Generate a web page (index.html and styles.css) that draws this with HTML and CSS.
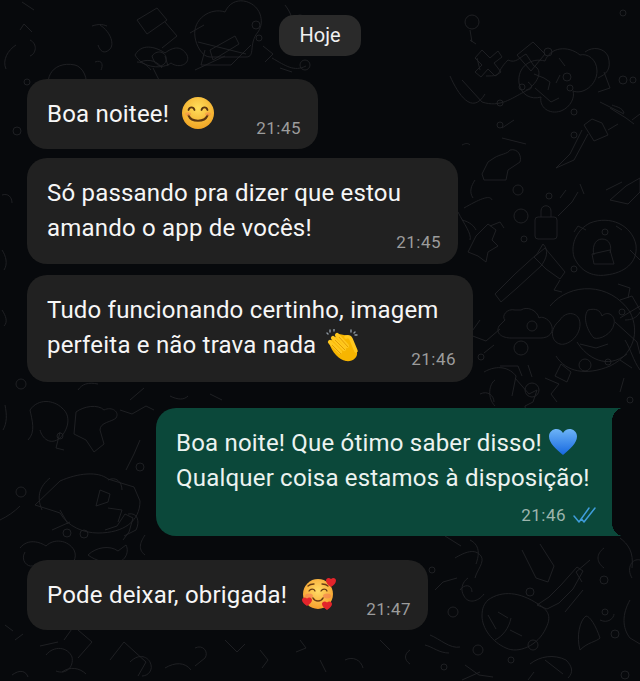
FILE: index.html
```html
<!DOCTYPE html>
<html lang="pt-BR">
<head>
    <meta charset="UTF-8">
    <meta name="viewport" content="width=device-width, initial-scale=1.0">
    <title>Conversa</title>
    <link rel="stylesheet" href="styles.css">
</head>
<body>
<div class="chat">

    <!-- doodle wallpaper behind the messages -->
    <svg class="doodles" width="640" height="681" viewBox="0 0 640 681" fill="none">
        <circle cx="472" cy="22" r="7"/><circle cx="548" cy="52" r="4"/><circle cx="623" cy="13" r="3"/>
        <circle cx="623" cy="80" r="4"/><circle cx="522" cy="87" r="3"/><circle cx="567" cy="77" r="4"/><circle cx="570" cy="88" r="3"/>
        <circle cx="633" cy="80" r="3"/><circle cx="500" cy="103" r="3"/><circle cx="574" cy="112" r="3"/>
        <circle cx="500" cy="125" r="3"/><circle cx="574" cy="135" r="3"/><circle cx="518" cy="190" r="5"/><circle cx="549" cy="196" r="3"/>
        <circle cx="521" cy="216" r="7"/><circle cx="524" cy="239" r="3"/><circle cx="574" cy="269" r="3"/><circle cx="532" cy="326" r="5"/>
        <circle cx="521" cy="348" r="7"/><circle cx="481" cy="357" r="3"/><circle cx="532" cy="390" r="7"/><circle cx="585" cy="365" r="6"/>
        <circle cx="608" cy="362" r="3"/><circle cx="622" cy="312" r="3"/><circle cx="605" cy="232" r="3"/>
        <circle cx="256" cy="25" r="4"/><circle cx="259" cy="38" r="3"/><circle cx="305" cy="65" r="5"/>
        <circle cx="17" cy="131" r="4"/><circle cx="27" cy="82" r="3"/><circle cx="21" cy="492" r="5"/><circle cx="67" cy="533" r="4"/>
        <circle cx="84" cy="534" r="4"/><circle cx="60" cy="436" r="3"/><circle cx="21" cy="384" r="5"/><circle cx="140" cy="467" r="4"/>
        <circle cx="432" cy="570" r="3"/><circle cx="453" cy="612" r="5"/><circle cx="530" cy="592" r="4"/><circle cx="533" cy="645" r="5"/>
        <circle cx="478" cy="650" r="5"/><circle cx="511" cy="660" r="3"/><circle cx="604" cy="580" r="4"/><circle cx="605" cy="612" r="3"/>
        <circle cx="615" cy="634" r="4"/><circle cx="625" cy="675" r="4"/><circle cx="444" cy="667" r="3"/><circle cx="630" cy="400" r="3"/>

        <!-- top left, cake and house -->
        <path d="M55 100c-15-18-4-40 20-35 8 2 14 14 10 24-3 9-20 14-30 11z"/>
        <path d="M47 178l48-14 3 8-46 22c-8 1-10-9-5-16zM60 110c8-12 24-16 22-2-1 8-14 18-16 30 8 2 16-4 20-2M60 145c12 2 24-3 30-6"/>
        <path d="M135 55c8-14 24-6 30-2 8-6 16-8 22 2 4 9-8 14-16 8-8 6-28 6-36-8zM142 96l16 8M95 62c8-3 8 4 6 8"/>
        <path d="M100 25c12 8 14 20 10 24-6 6-10 2-12-4M92 26c6-2 10-2 15 0"/>
        <path d="M137 20l20-12 10 12-20 14zM165 22l12 14-15 12"/>
        <path d="M195 95l12-8 8 10M197 115l22-12 8 4-22 14zM210 50l25-14 4 8-26 16zM195 70l30-14"/>
        <path d="M190 33l14-8M140 62c10-4 18 0 22 6"/>
        <path d="M195 37c-3-18 16-30 30-25 8-18 30-12 35 2 2 6 2 12-2 18-10 12-2 25-12 25H210c-8 0-14-12-15-20zM198 42l48 12M205 50l-4 15h30l20-20"/>
        <path d="M152 56c6-8 16-3 14 5-2 6-10 8-14-5zM137 62c6 0 10 3 14 8"/>
        <circle cx="300" cy="20" r="5"/>
        <path d="M263 46l10 8-8 8M285 5c6 8 10 16 4 26M272 58c14 8 22 14 34 8M280 68l12 4"/>
        <path d="M153 68l6 12-6 5M165 56l3 10"/>
        <path d="M20 30l4-6 8 8M16 45c-8 5-14 15-10 24M30 40c8 4 6 14 0 16"/>

        <!-- top right, flower and star -->
        <path d="M580 55c-12-10-30-8-35 6-14-4-28 6-26 22 2 12 12 17 22 14-2 10 8 18 20 14 10-4 14-14 12-20 10 4 24-6 24-20 0-12-10-18-17-16z"/>
        <path d="M598 78c8-4 14-8 10-22-4-8-15-10-23-4M604 72l6 16-12 4"/>
        <path d="M482 50l8 8 8-7 4 6-8 6 7 9-6 4-7-7-7 8-6-5 7-7-7-7zM517 55l16-13 12 12-14 17z"/>
        <path d="M462 80l20 22c18 6 30-4 42-10 14-8 20-22 10-26l-8-12c-6 3-10 10-18 6-14 14-4 16-22 16"/>
        <path d="M450 76c8 18 22 40 35 18"/>
        <path d="M480 70l-3-12M470 40l6 4M470 30l2 12"/>
        <path d="M510 150c8-2 12 6 10 12l-12 8-2 10h-22l-2-6 6-12 6-4c6-4 14-4 16-8z"/>
        <path d="M565 66l-6-8M535 88l16 14 8-4"/>
        <path d="M584 125l10 16 14-6-6-12-10-4zM582 130l-12 24-14 14 18-8 14-26"/>
        <path d="M560 75l-4 8M502 128l12-8M502 138l24 6"/>
        <path d="M528 82c6 4 4 8-2 8M534 74l10 4 6 4-2 8"/>
        <path d="M600 102l16 8 8 4M612 105c4 2 10 2 12 8"/>
        <path d="M618 124l-10 6M640 114l-8 6M610 108l16 10 8 6"/>

        <!-- right edge, bear and lock -->
        <path d="M590 223c20-8 42 2 46 22 2 18-12 28-30 30-14 2-26-4-32-18-4-14 4-28 16-34z"/>
        <path d="M592 254l18-4 4 14h-20zM594 255c-2-6 0-16 8-16 8 0 10 8 8 14M574 232l4-6 8 4M616 226l6 4"/>
        <path d="M538 217h16a3 3 0 0 1 3 3v16a3 3 0 0 1-3 3h-16a3 3 0 0 1-3-3v-16a3 3 0 0 1 3-3zM541 217v-6c0-7 10-7 10 0v6"/>
        <path d="M558 216l14-14 6-10M566 190l-6 8M580 184l4 10"/>
        <path d="M610 200l16-14 14-8v14l-12 12zM606 190l16-8"/>
        <path d="M476 236l12-12 8 6-4 10 6 6-10 6-2 10-8-6-10-4 4-8zM490 226l10-4 4 6"/>
        <path d="M464 208c14-8 26-14 28-8M458 212c6 12 14 22 12 28"/>
        <path d="M537 254l-22 20-20 20 6 8 16-14 24-22c6-8 8-16 2-22z"/>
        <path d="M545 248l20 24-5 7-14-10-12-12zM560 280l-6 10 8 2"/>
        <path d="M515 310c-8-2-14 6-10 10l-6 6c-4 8 4 12 12 12h30c8 0 14-6 10-14-3-6-10-8-12-6-2-8-12-12-18-8z"/>
        <path d="M550 306c20-24 60-24 80 6 10 20 4 42-20 54-24 10-44 6-54-10"/>
        <path d="M560 320c6-10 20-8 20 4 0 14-14 22-20 20-8-2-12-14 0-24zM588 310c8-2 12 0 14 6 6-6 14 0 12 8-2 10-14 16-20 14-6-6-12-20-6-28z"/>
        <path d="M577 342c10 16 30 28 50 12M580 344l16 4 12-4"/>
        <path d="M620 318l20-12M615 322l22 20 3 12M620 360l12 8"/>
        <path d="M515 378l14 16 8-4-4 12-8 4 2 14M545 378l14 6-8 10 6 8"/>
        <path d="M470 335l16 6 14-12M480 320l-10 14 2 6M494 345l-10 8"/>
        <path d="M495 380c-6 4-8 18 0 26M484 372c14-8 26-4 32 4l-4 20M500 366h18l4 10"/>
        <path d="M555 376l12 6 4-10-10-8zM528 365l4 12"/>
        <path d="M630 250l10 10M618 284l12 4-2 10M620 300l12-4 8 14"/>
        <path d="M625 320c6 0 12-2 15-8M625 340c6 10 8 20 15 30M624 378l-4 14"/>

        <!-- left edge -->
        <path d="M5 405c2 10 2 18-2 25M28 440c8-8 4-20 2-30 8-12 24-10 32-2 10 8 6 22-2 30-10 8-18 0-20-8"/>
        <path d="M60 432l-4 16 8 2"/>
        <path d="M76 412c8-6 22-8 28-2 8-4 16 2 12 8-4 4-16 4-16 12l4 14-10 8-8-12-12-6zM78 390c4-6 10-8 20-6"/>
        <path d="M35 505l25-24c18-8 38-10 48-2l26 8 6 14c0 20-16 32-42 32-14 0-30-6-38-20l-6-2z"/>
        <path d="M50 478c-10 8-14 18-8 32M60 510l8 14M52 530l18-8"/>
        <path d="M100 490l10 4-2 8-12 4zM105 530l12-4 8-12 8 4-4 14-6 8"/>
        <path d="M128 514c10-2 12 8 8 16l-12 6"/>
        <path d="M120 410l12 4 14-8 8 4M140 440l-6 14-8 16"/>
        <path d="M20 548c8-10 20-6 26-2 8-8 22-6 28 4 4 8-2 16-8 18M25 552c-6 10 6 18 10 12 6 6 14 8 18 0"/>
        <path d="M88 555c8-8 22-10 30-4l8-6c4 8-2 18-12 18-8 0-18-2-26-8z"/>
        <path d="M145 535c-4 6-8 14 0 20M108 508l14 2-4 12M108 480c8-4 14 2 14 10"/>
        <path d="M0 520c8-4 14-8 20-14"/>
        <path d="M2 250c4 6 6 14 2 20M2 310c4 6 6 12 2 16M2 195c6-2 10 2 10 8"/>

        <!-- bottom -->
        <path d="M488 600c14-10 32-8 50 4 10 6 14 12 8 24-8 18-28 26-40 20-14-6-24-20-24-32 0-8 2-12 6-16zM495 640c8-4 14-12 16-22"/>
        <path d="M510 630l12 6M488 615l8 14M498 612l10 6"/>
        <path d="M468 578c-6 4-8 12-4 18 4 8 14 6 20-2M460 590c4-6 12-6 12 2"/>
        <path d="M537 605l12-8 12-12 16-18 6 4-10 18-14 14-12 6zM583 590l-18 22"/>
        <path d="M580 650c-4-14 0-30 6-34 4 0 10 10 14 22-4 4-12 4-20 12zM600 620c8 4 14-2 14-6"/>
        <path d="M430 635c10 4 20 14 30 12M425 645c8 2 14 8 24 8M465 665l14 10 14 2M480 672l-18 8"/>
        <path d="M530 664c10-8 24-10 36-4 6 6 8 12 2 18M545 660l18 14M534 672l-6 8"/>
        <path d="M435 590l8-8 14-4M455 558c10-6 20-10 26-2 4 6-4 14-6 22"/>
        <path d="M522 550l14 28 12 4 6-16-14-22M590 560l-14 12 6 10M604 548c-8 6-8 14 0 20"/>
        <path d="M620 538c8 6 14 14 12 30M640 560c-8-2-14 8-8 18M630 600c-8 14-8 28 0 38l10 6"/>
        <path d="M46 655c8-10 22-8 26 2 2 10-6 18-16 14M64 640l10-14M40 646l18-4M78 630l14 12-14 16"/>
        <path d="M12 675c8-6 14-4 16 2M62 672c8-6 18-4 24 2M130 662c10-10 18-4 20 0 4 8-2 14-8 14"/>
        <path d="M110 660l14-18 22 20-8 14M165 668c10-6 20-6 26 2"/>
        <path d="M195 648c8-4 14 4 10 10l-10 8M225 640l12 12 8-8M260 650l8 10-6 8"/>
        <path d="M300 640l6 8-10 4M320 660l6 12M345 660c8-4 16 0 18 8M380 640l10 10M410 650c-6 4-6 10 0 14"/>
        <path d="M15 640l8-6M5 625l8 6"/>
        <path d="M470 540c12 6 8 18 6 24M445 536l16 10"/>

        <!-- between left bubbles and green bubble -->
        <path d="M22 2l12 8M130 400l14-12M170 396c8 4 14 4 18 0M210 394l12 6M480 394c8-4 14 2 14 8"/>
        <path d="M475 180c-4 6-6 12-2 18M462 220c8 2 12 6 14 10M462 145c4-2 6-2 8 0"/>
    </svg>

    <div class="msgs">
        <div class="day">Hoje</div>

        <div class="msg in w1">
            <div class="msg-text">Boa noitee!<svg class="emoji smile" width="34" height="34" viewBox="0 0 34 34">
                <defs><radialGradient id="face1" cx="50%" cy="35%" r="70%"><stop offset="0" stop-color="#ffdf5c"/><stop offset="1" stop-color="#f0a020"/></radialGradient></defs>
                <circle cx="17" cy="17" r="16" fill="url(#face1)"/>
                <path d="M7.5 14c1-3.5 5-3.5 6 0M20.5 14c1-3.5 5-3.5 6 0" fill="none" stroke="#5a3510" stroke-width="1.8" stroke-linecap="round"/>
                <path d="M7.5 19.5c3 7 16 7 19 0" fill="none" stroke="#5a3510" stroke-width="2" stroke-linecap="round"/>
                <ellipse cx="7" cy="18" rx="3" ry="1.8" fill="#f58a4a" opacity=".55"/><ellipse cx="27" cy="18" rx="3" ry="1.8" fill="#f58a4a" opacity=".55"/>
            </svg></div>
            <div class="time">21:45</div>
        </div>

        <div class="msg in w2">
            <div class="msg-text">Só passando pra dizer que estou<br>amando o app de vocês!</div>
            <div class="time">21:45</div>
        </div>

        <div class="msg in w3">
            <div class="msg-text">Tudo funcionando certinho, imagem<br>perfeita e não trava nada<svg class="emoji clap" width="34" height="34" viewBox="0 0 34 34">
                <path d="M3 14L14 5l10 2 8 16c1 6-5 10-11 9-7-1-14-9-17-18z" fill="#f7b500"/>
                <path d="M5 13l10 10M8 9l11 11M12 6l10 11" stroke="#ffc81e" stroke-width="4.2" stroke-linecap="round"/>
                <path d="M7 16l9 9M10 11l10 10M14 8l9 10" stroke="#dc9200" stroke-width=".8"/>
                <path d="M21 8c3-1 4 0 5 2l5 12" fill="none" stroke="#ffc81e" stroke-width="3.5" stroke-linecap="round"/>
                <path d="M5 1v2M9 0v2M2 4l1 1M26 1v2M30 3l-1 1M32 6h-2" stroke="#8e99a3" stroke-width="1.4" stroke-linecap="round"/>
            </svg></div>
            <div class="time">21:46</div>
        </div>

        <div class="msg out w4">
            <div class="msg-text">Boa noite! Que ótimo saber disso!<svg class="emoji heart" width="30" height="28" viewBox="0 0 30 28">
                <defs><linearGradient id="blue" x1="0" y1="0" x2="0" y2="1"><stop offset="0" stop-color="#6db4f7"/><stop offset="1" stop-color="#1668e0"/></linearGradient></defs>
                <path d="M15 27C8 21 1 15 1 8.5 1 3.5 5 1 8.5 1 11 1 13.5 2.5 15 5c1.5-2.5 4-4 6.5-4C25 1 29 3.5 29 8.5 29 15 22 21 15 27z" fill="url(#blue)"/>
            </svg><br>Qualquer coisa estamos à disposição!</div>
            <div class="time">21:46<svg class="ticks" width="24" height="16" viewBox="0 0 24 16" fill="none">
                <path d="M1 9l5 6L16 1M11 15L22 1M8.5 12l2.500 3" stroke="#3f9ddb" stroke-width="1.5" stroke-linecap="round" stroke-linejoin="round"/>
            </svg></div>
        </div>

        <div class="msg in w5">
            <div class="msg-text">Pode deixar, obrigada!<svg class="emoji hug" width="36" height="36" viewBox="0 0 36 36">
                <defs><radialGradient id="face2" cx="50%" cy="40%" r="65%"><stop offset="0" stop-color="#ffdc66"/><stop offset="1" stop-color="#f59a28"/></radialGradient></defs>
                <circle cx="17" cy="18" r="15" fill="url(#face2)"/>
                <ellipse cx="8" cy="20" rx="4" ry="2.5" fill="#f47a50" opacity=".6"/><ellipse cx="26" cy="20" rx="4" ry="2.5" fill="#f47a50" opacity=".6"/>
                <path d="M8 15c1.5-2.5 5-2.5 6 0M20 15c1.5-2.5 5-2.5 6 0M7 10c2-2 4-2 6-2M21 8c2 0 4 0 6 2" fill="none" stroke="#6b3d14" stroke-width="1.3" stroke-linecap="round"/>
                <path d="M12 22c2 4 8 4 10 0" fill="none" stroke="#6b3d14" stroke-width="1.6" stroke-linecap="round"/>
                <path d="M30 11c-3-2-5-4-5-6.5C25 2 28 1 30 3c2-2 5-1 5 1.5 0 2.5-2 4.5-5 6.5z" fill="#e3242b"/>
                <path d="M6 30c-3-2-5-4-5-6 0-2.500 3-3.500 5-1.500 2-2 5-1 5 1.500 0 2-2 4-5 6zM26 34c-3-2-5-4-5-6 0-2.500 3-3.500 5-1.500 2-2 5-1 5 1.500 0 2-2 4-5 6z" fill="#e3242b"/>
            </svg></div>
            <div class="time">21:47</div>
        </div>
    </div>
</div>
</body>
</html>
```

FILE: styles.css
```css
* { box-sizing: border-box }

body {
    margin: 0;
    background: #07090c;
    font-family: Roboto, "Liberation Sans", sans-serif;
    overflow: hidden;
}

.chat {
    position: relative;
    width: 640px;
    height: 681px;
    overflow: hidden;
}

.doodles {
    position: absolute;
    top: 0;
    left: 0;
    stroke: #212326;
    stroke-width: .9;
}

.msgs {
    position: relative;
    display: flex;
    flex-direction: column;
    align-items: flex-start;
    padding: 15px 0 0 27px;
}

.day {
    align-self: flex-start;
    margin-left: 252px;
    width: 82px;
    height: 41px;
    line-height: 41px;
    text-align: center;
    background: #2a2a2a;
    border-radius: 15px;
    color: #f1f1f1;
    font-size: 20px;
}

.msg {
    display: flex;
    flex-direction: column;
    padding: 18px 17px 12px 20px;
    border-radius: 20px;
    color: #f6f6f6;
    background: #212121;
}

.msg-text {
    font-size: 24px;
    line-height: 35px;
    letter-spacing: .2px;
    white-space: nowrap;
}

.time {
    display: flex;
    align-self: flex-end;
    align-items: center;
    height: 20px;
    margin-top: -14px;
    color: #9c9c9c;
    font-size: 17px;
    letter-spacing: .5px;
}

/* negative block margins keep the emoji from stretching the line */
.emoji {
    margin-top: -10px;
    margin-bottom: -10px;
}
.smile { margin-left: 12px; vertical-align: 2px }
.clap { margin-left: 9px; vertical-align: 0 }
.heart { margin-left: 6px; vertical-align: 5px }
.hug { margin-left: 14px; vertical-align: 1px }

.w1 { width: 291px; margin-top: 23px; padding-bottom: 11px }
.w2 { width: 431px; margin-top: 9px }
.w3 { width: 446px; margin-top: 11px; padding-bottom: 13px }
.w5 { width: 401px; margin-top: 24px; padding-bottom: 11px }

.w4 {
    position: relative;
    width: 456px;
    margin-top: 26px;
    margin-left: 129px;
    padding: 18px 15px 11px 20px;
    background: #0b483a;
    border-radius: 20px 0 0 20px;
    color: #ecf3f0;
}

/* little flares on the right side of the sent bubble */
.w4::before, .w4::after {
    content: "";
    position: absolute;
    left: 100%;
    width: 11px;
    height: 13px;
}
.w4::before {
    top: 0;
    background: radial-gradient(ellipse 11px 13px at 100% 100%, transparent 98%, #0b483a 100%);
}
.w4::after {
    bottom: 0;
    background: radial-gradient(ellipse 11px 13px at 100% 0, transparent 98%, #0b483a 100%);
}

.w4 .time {
    margin-top: 9px;
    color: #9db5ad;
}

.ticks { margin-left: 7px }
```
